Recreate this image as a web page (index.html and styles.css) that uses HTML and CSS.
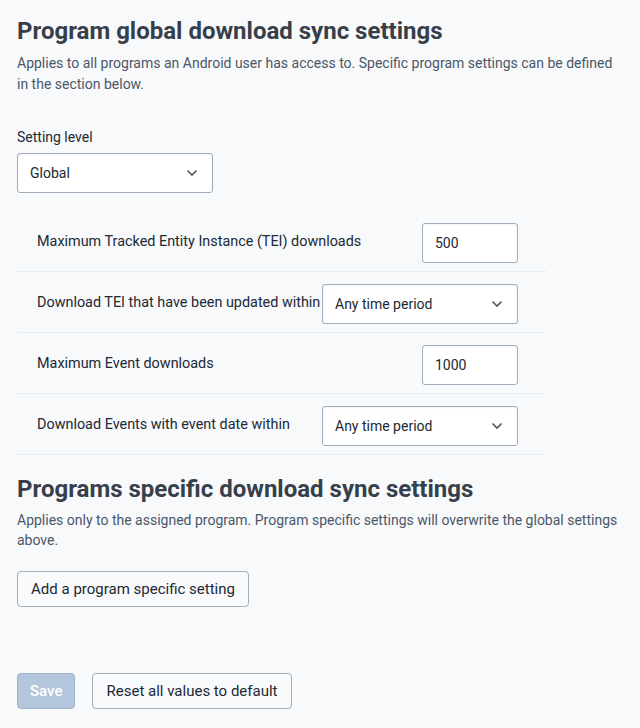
FILE: index.html
```html
<!DOCTYPE html>
<html lang="en">
<head>
<meta charset="utf-8">
<title>Program settings</title>
<link rel="stylesheet" href="styles.css">
</head>
<body>
<main class="page">
  <section class="section">
    <h1 class="title">Program global download sync settings</h1>
    <p class="desc">Applies to all programs an Android user has access to. Specific program settings can be defined in the section below.</p>

    <div class="field-level">
      <label class="field-label">Setting level</label>
      <div class="select select-level">
        <span>Global</span>
        <svg class="chev" width="12" height="8" viewBox="0 0 12 8"><path d="M1.5 1.5 L6 6 L10.5 1.5" fill="none" stroke="#4a5768" stroke-width="1.6"/></svg>
      </div>
    </div>

    <div class="rows">
      <div class="row">
        <div class="row-label">Maximum Tracked Entity Instance (TEI) downloads</div>
        <div class="input">500</div>
      </div>
      <div class="row">
        <div class="row-label">Download TEI that have been updated within</div>
        <div class="select select-period">
          <span>Any time period</span>
          <svg class="chev" width="12" height="8" viewBox="0 0 12 8"><path d="M1.5 1.5 L6 6 L10.5 1.5" fill="none" stroke="#4a5768" stroke-width="1.6"/></svg>
        </div>
      </div>
      <div class="row">
        <div class="row-label">Maximum Event downloads</div>
        <div class="input">1000</div>
      </div>
      <div class="row">
        <div class="row-label">Download Events with event date within</div>
        <div class="select select-period">
          <span>Any time period</span>
          <svg class="chev" width="12" height="8" viewBox="0 0 12 8"><path d="M1.5 1.5 L6 6 L10.5 1.5" fill="none" stroke="#4a5768" stroke-width="1.6"/></svg>
        </div>
      </div>
    </div>
  </section>

  <section class="section section-specific">
    <h2 class="title">Programs specific download sync settings</h2>
    <p class="desc">Applies only to the assigned program. Program specific settings will overwrite the global settings above.</p>
    <button class="btn btn-add" type="button">Add a program specific setting</button>
  </section>

  <div class="actions">
    <button class="btn btn-primary" type="button" disabled>Save</button>
    <button class="btn btn-reset" type="button">Reset all values to default</button>
  </div>
</main>
</body>
</html>
```

FILE: styles.css
```css
* { box-sizing: border-box; }

html, body {
  margin: 0;
  background: #f8f9fb;
}

body {
  font-family: Roboto, "Liberation Sans", sans-serif;
  color: #212934;
}

.page {
  padding: 17px 16px 0 17px;
}

.title {
  margin: 0;
  font-size: 24px;
  line-height: 28px;
  font-weight: 700;
  color: #373f4a;
}

.desc {
  margin: 8px 0 0;
  font-size: 14px;
  line-height: 21px;
  color: #4a5768;
}

.field-level {
  margin-top: 34px;
}

.field-label {
  display: block;
  font-size: 14px;
  line-height: 16px;
  color: #212934;
  margin-bottom: 8px;
}

.select,
.input {
  height: 40px;
  border: 1px solid #a0adba;
  border-radius: 3px;
  background: #fff;
  box-shadow: inset 0 1px 2px rgba(48, 54, 60, 0.06);
  font-size: 14px;
  color: #212934;
  display: flex;
  align-items: center;
  padding: 0 12px;
}

.select {
  justify-content: space-between;
}

.select-level { width: 196px; }
.select-period { width: 196px; }
.input { width: 96px; }

.chev { margin-right: 2px; }

.rows {
  width: 530px;
  margin-top: 18px;
}

.row {
  display: flex;
  align-items: flex-start;
  justify-content: space-between;
  padding: 12px 29px 8px 20px;
  border-bottom: 1px solid #e8edf2;
}

.row-label {
  font-size: 14.4px;
  line-height: 18px;
  padding-top: 10px;
  color: #212934;
  white-space: nowrap;
}

.section-specific {
  margin-top: 20px;
}

.section-specific .desc {
  margin-top: 7px;
  line-height: 20px;
}

.btn {
  height: 36px;
  font-family: inherit;
  font-size: 15px;
  line-height: 16px;
  color: #212934;
  background: #f9fafb;
  border: 1px solid #a0adba;
  border-radius: 4px;
  padding: 0 12px;
  cursor: pointer;
}

.btn-add {
  margin-top: 21px;
  width: 232px;
}

.actions {
  display: flex;
  gap: 17px;
  margin-top: 66px;
}

.btn-primary {
  background: #b4c6dc;
  border-color: #9fb3cb;
  color: #fff;
  font-weight: 500;
  width: 58px;
}

.btn-reset { width: 200px; }
```
